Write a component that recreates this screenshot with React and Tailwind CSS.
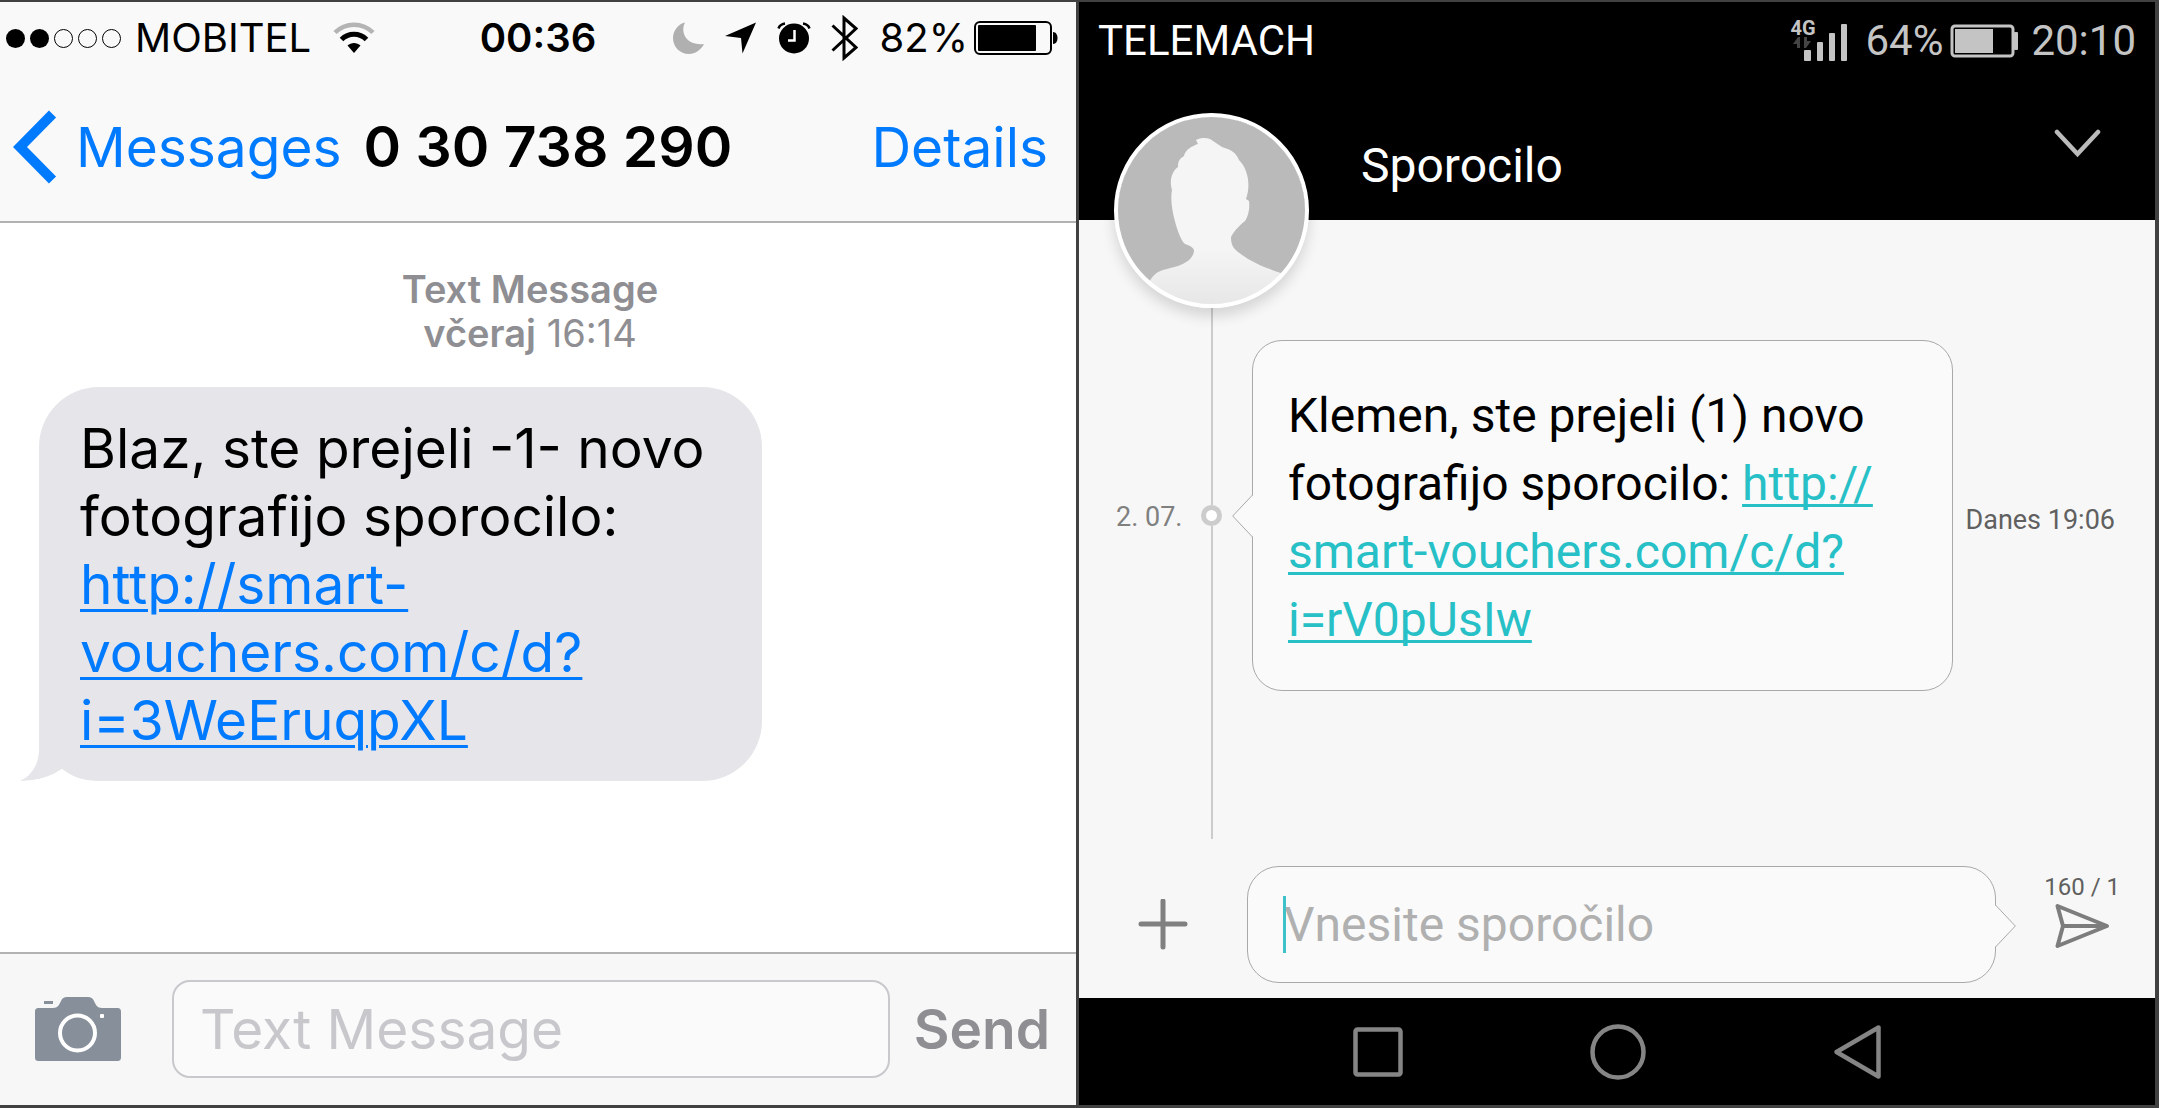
import React, { useState } from 'react';

const SIGNAL_DOTS = [true, true, false, false, false];

function WifiIcon() {
  return (
    <svg width="42" height="32" viewBox="0 0 42 32" fill="none" aria-hidden="true">
      <path d="M2 10.5C12.500 0 29.500 0 40 10.500" stroke="#b4b4b4" strokeWidth="4.500" />
      <path d="M8.500 17.500C15.500 10.500 26.500 10.500 33.500 17.500" stroke="#000" strokeWidth="5" />
      <path d="M14.500 23.500C18 20 24 20 27.500 23.500L21 31Z" fill="#000" />
    </svg>
  );
}

function AlarmIcon() {
  return (
    <svg width="34" height="32" viewBox="0 0 34 32" fill="none" aria-hidden="true">
      <circle cx="17" cy="16.500" r="15" fill="#000" />
      <path d="M17.500 8V18.500H11" stroke="#fff" strokeWidth="2.500" />
      <path d="M1.500 6.500C2.500 3.500 4.500 2 8 1.500M32.500 6.500C31.500 3.500 29.500 2 26 1.500" stroke="#000" strokeWidth="2.500" />
    </svg>
  );
}

function IosBattery() {
  return (
    <svg width="85" height="34" viewBox="0 0 85 34" fill="none" aria-hidden="true">
      <rect x="1" y="1" width="76" height="32" rx="5" stroke="#000" strokeWidth="2" />
      <rect x="4" y="4" width="58" height="26" rx="1" fill="#000" />
      <path d="M79 11C85 11 85 23 79 23Z" fill="#000" />
    </svg>
  );
}

function CameraIcon() {
  return (
    <svg width="86" height="64" viewBox="0 0 86 64" aria-hidden="true">
      <path
        d="M4 11H18C23 11 24 8 26 4C27.500 1 29 0 32 0H53C56 0 57.500 1 59 4C61 8 62 11 67 11H82C85 11 86 12 86 15V60C86 63 85 64 82 64H4C1 64 0 63 0 60V15C0 12 1 11 4 11Z"
        fill="#868f9a"
      />
      <rect x="9" y="4" width="9" height="3" fill="#868f9a" />
      <circle cx="42.500" cy="36" r="17.500" fill="none" stroke="#fff" strokeWidth="4" />
      <rect x="65" y="17" width="4" height="4" rx="1" fill="#fff" />
    </svg>
  );
}

function IosStatusBar() {
  return (
    <div className="grid h-[72px] grid-cols-[1fr_auto_1fr] items-center px-[6px] text-[40px] leading-[48px] text-black">
      <div className="flex items-center">
        <div className="flex gap-[5px]">
          {SIGNAL_DOTS.map((on, i) => (
            <span key={i} className={on ? 'size-[19px] rounded-full bg-black' : 'size-[19px] rounded-full border border-black'} />
          ))}
        </div>
        <span className="mr-[22px] ml-[14px]">MOBITEL</span>
        <WifiIcon />
      </div>
      <span className="font-semibold">00:36</span>
      <div className="flex items-center justify-end pr-[11px]">
        <svg width="32" height="32" viewBox="0 0 32 32" aria-hidden="true">
          <path d="M12 0.500C7 10 13 24 31 22C28 28 22 32 16 32C7 32 0 25 0 16C0 9 5 2 12 0.500Z" fill="#b0b0b0" />
        </svg>
        <svg className="ml-[20px]" width="32" height="32" viewBox="0 0 32 32" aria-hidden="true">
          <path d="M31 0.500L17.500 31.500L16 16L0 14Z" fill="#000" />
        </svg>
        <span className="ml-[20px]"><AlarmIcon /></span>
        <svg className="ml-[20px]" width="27" height="46" viewBox="0 0 27 46" fill="none" aria-hidden="true">
          <path d="M1.500 10.500L25 32.500L13 43V3L25 13.500L1.500 35.500" stroke="#000" strokeWidth="3" />
        </svg>
        <span className="mr-[6px] ml-[22px]">82%</span>
        <IosBattery />
      </div>
    </div>
  );
}

function IosPhone() {
  const [text, setText] = useState('');

  return (
    <section className="flex flex-col bg-white font-['Inter',sans-serif]">
      <header className="border-b-2 border-[#b2b2b2] bg-[#f9f9f9]">
        <IosStatusBar />
        <div className="flex h-[147px] items-center pr-[28px] pb-[2px] pl-[13px] text-[55px] leading-[68px]">
          <button type="button" className="flex items-center gap-[19px] text-[#007aff]">
            <svg width="44" height="74" viewBox="0 0 44 74" fill="none" aria-hidden="true">
              <path d="M39.500 4L7 37L39.500 70" stroke="currentColor" strokeWidth="10" />
            </svg>
            Messages
          </button>
          <h1 className="ml-[22px] text-[57px] font-semibold whitespace-nowrap text-black">0 30 738 290</h1>
          <button type="button" className="ml-auto text-[#007aff]">Details</button>
        </div>
      </header>

      <div className="flex-1 pt-[44px]">
        <p className="pr-[16px] text-center text-[38px] leading-[44px] text-[#8e8e93]">
          <span className="font-semibold">Text Message</span>
          <br />
          <span className="font-semibold">včeraj</span> 16:14
        </p>
        <div className="relative mt-[32px] ml-[39px] w-fit rounded-[60px] bg-[#e5e5ea] py-[27px] pr-[57px] pl-[41px] text-[55px] leading-[68px] text-black">
          <svg className="absolute bottom-0 -left-[19px]" width="80" height="60" viewBox="0 0 80 60" aria-hidden="true">
            <path d="M19 0V28C19 42 13 54 0 60C16 60 31 56 42 48C52 56 62 60 80 60V0Z" fill="#e5e5ea" />
            <path d="M0 60C16 60 31 56 42 48C52 56 62 60 80 60Z" fill="#fff" />
          </svg>
          <p className="relative">
            Blaz, ste prejeli -1- novo
            <br />
            fotografijo sporocilo:
            <br />
            <a href="#" className="text-[#007aff] underline decoration-[3px] underline-offset-[5px]">
              http://smart-
              <br />
              vouchers.com/c/d?
              <br />
              i=3WeEruqpXL
            </a>
          </p>
        </div>
      </div>

      <footer className="flex items-center border-t-2 border-[#b2b2b2] bg-[#f7f7f7] pt-[26px] pr-[26px] pb-[27px] pl-[35px] text-[55px]">
        <button type="button" aria-label="Camera"><CameraIcon /></button>
        <input
          type="text"
          aria-label="Text Message"
          placeholder="Text Message"
          value={text}
          onChange={(e) => setText(e.target.value)}
          className="ml-[51px] h-[98px] min-w-0 flex-1 rounded-[18px] border-2 border-[#c8c8cd] bg-[#fafafa] px-[26px] placeholder:text-[#c7c7cc] placeholder:opacity-100"
        />
        <button type="button" className="ml-[24px] font-semibold text-[#8e8e93]">Send</button>
      </footer>
    </section>
  );
}

function MobileSignal() {
  return (
    <span className="flex items-start">
      <span className="flex w-[26px] flex-col items-start text-[20px] leading-[18px] font-bold">
        4G
        <svg className="ml-[3px]" width="18" height="12" viewBox="0 0 18 12" fill="#444" aria-hidden="true">
          <path d="M7 0V11H4V7H0L5 0ZM11 0H14V4H18L13 11H11Z" />
        </svg>
      </span>
      <svg className="-ml-[12px]" width="45" height="44" viewBox="0 0 45 44" fill="currentColor" aria-hidden="true">
        <rect x="0" y="31" width="7" height="11" rx="1" />
        <rect x="13" y="23" width="6" height="19" rx="1" />
        <rect x="25" y="14" width="6" height="28" rx="1" />
        <rect x="37" y="5" width="6" height="37" rx="1" />
      </svg>
    </span>
  );
}

function Avatar() {
  return (
    <svg className="size-full" viewBox="0 0 195 195" aria-hidden="true">
      <defs>
        <clipPath id="avatar-clip"><circle cx="97.500" cy="97.500" r="94" /></clipPath>
        <linearGradient id="avatar-body" x1="0" y1="0" x2="0" y2="1">
          <stop offset="0.650" stopColor="#f5f5f5" />
          <stop offset="1" stopColor="#e6e6e6" />
        </linearGradient>
      </defs>
      <circle cx="97.500" cy="97.500" r="94" fill="#bababa" />
      <path
        clipPath="url(#avatar-clip)"
        fill="url(#avatar-body)"
        d="M34 172C37 164 42 159 49 157L64 153C74 149 79 145 80 138C80 135 77 133 71 131C66 127 61 110 59 100C57 90 57 82 58 77C55 68 58 58 64 54C64 49 65 46 70 43C71 37 78 33 84 31L82 27C88 24 92 25 96 26L108 34C118 37 122 40 125 47C134 56 137 72 132 86L135 88C136 96 134 104 131 108C126 112 120 118 117 124C117 130 118 134 124 139C138 150 152 155 170 161V195H34Z"
      />
      <circle cx="97.500" cy="97.500" r="95.500" fill="none" stroke="#fff" strokeWidth="4" />
    </svg>
  );
}

function AndroidHeader() {
  return (
    <header className="relative bg-black text-white">
      <div className="flex h-[78px] items-center pr-[19px] pl-[19px] text-[42px] leading-[48px]">
        <span>TELEMACH</span>
        <div className="ml-auto flex items-center text-[#c4c4c4]">
          <MobileSignal />
          <span className="ml-[16px]">64%</span>
          <svg className="ml-[7px]" width="68" height="34" viewBox="0 0 68 34" fill="none" aria-hidden="true">
            <rect x="2" y="2" width="61" height="30" rx="3" stroke="currentColor" strokeWidth="3" />
            <rect x="5" y="5" width="38" height="24" fill="currentColor" />
            <rect x="64" y="8" width="4" height="18" rx="1" fill="currentColor" />
          </svg>
          <span className="ml-[13px]">20:10</span>
        </div>
      </div>
      <div className="flex items-start pt-[48px] pr-[54px] pb-[26px] pl-[282px]">
        <h1 className="mt-[10px] text-[48px] leading-[56px]">Sporocilo</h1>
        <button type="button" aria-label="Expand" className="ml-auto">
          <svg width="47" height="30" viewBox="0 0 47 30" fill="none" aria-hidden="true">
            <path d="M3 4L23.500 26L44 4" stroke="#bbb" strokeWidth="4.500" strokeLinecap="round" />
          </svg>
        </button>
      </div>
      <div className="absolute -bottom-[88px] left-[35px] size-[195px] rounded-full shadow-[0_8px_14px_rgba(0,0,0,0.14)]">
        <Avatar />
      </div>
    </header>
  );
}

function AndroidPhone() {
  const [text, setText] = useState('');

  return (
    <section className="flex flex-col bg-[#f7f7f7] font-['Roboto',sans-serif]">
      <AndroidHeader />

      <div className="flex flex-1 items-start pr-[40px] pl-[37px] text-[27px] leading-[32px]">
        <time className="mt-[281px] w-[85px] shrink-0 text-[#808080]">2. 07.</time>
        <div className="flex shrink-0 flex-col items-center self-stretch">
          <span className="h-[285px] w-[2px] bg-[#ccc]" />
          <span className="size-[21px] rounded-full border-[5px] border-[#ccc] bg-white" />
          <span className="w-[2px] flex-1 bg-[#ccc]" />
        </div>
        <div className="relative mt-[120px] mr-[12px] ml-[30px] flex-1 rounded-[30px] border border-[#a9a9a9] bg-[#fafafa] pt-[41px] pb-[36px] pl-[35px] text-[48px] leading-[68px] text-black">
          <p>
            Klemen, ste prejeli (1) novo
            <br />
            fotografijo sporocilo:{' '}
            <a href="#" className="text-[#27c0c7] underline decoration-[3px] underline-offset-[4px] [text-decoration-skip-ink:none]">
              http://
              <br />
              smart-vouchers.com/c/d?
              <br />
              i=rV0pUsIw
            </a>
          </p>
          <svg className="absolute top-[154px] -left-[21px]" width="22" height="42" viewBox="0 0 22 42" aria-hidden="true">
            <path d="M22 0H20.500V0.500L0.500 21L20.500 41.500V42H22Z" fill="#fafafa" />
            <path d="M20.500 0L0.700 21L20.500 42" fill="none" stroke="#a9a9a9" />
          </svg>
        </div>
        <time className="mt-[284px] shrink-0 text-[#606060]">Danes 19:06</time>
      </div>

      <div className="flex items-center pt-[27px] pr-[35px] pb-[15px] pl-[59px]">
        <button type="button" aria-label="Add attachment">
          <svg width="50" height="52" viewBox="0 0 50 52" fill="none" aria-hidden="true">
            <path d="M25 2V48M3 25H47" stroke="#808080" strokeWidth="5" strokeLinecap="round" />
          </svg>
        </button>
        <div className="relative ml-[59px] flex-1">
          <input
            type="text"
            aria-label="Vnesite sporočilo"
            placeholder="Vnesite sporočilo"
            value={text}
            onChange={(e) => setText(e.target.value)}
            className="block h-[117px] w-full rounded-[32px] border border-[#a9a9a9] bg-[#fafafa] px-[36px] text-[48px] caret-[#27c0c7] placeholder:text-[#b0b0b0] placeholder:opacity-100"
          />
          <span className="absolute top-[30px] left-[36px] h-[57px] w-[3px] bg-[#3fc1c9]" />
          <svg className="absolute top-[39px] -right-[20px]" width="22" height="42" viewBox="0 0 22 42" aria-hidden="true">
            <path d="M0 0H1.500V0.500L21.500 21L1.500 41.500V42H0Z" fill="#fafafa" />
            <path d="M1.500 0L21.300 21L1.500 42" fill="none" stroke="#a9a9a9" />
          </svg>
        </div>
        <div className="ml-[48px] flex flex-col items-center gap-[2px] self-start pt-[7px]">
          <span className="text-[24px] leading-[28px] text-[#606060]">160 / 1</span>
          <button type="button" aria-label="Send">
            <svg width="55" height="46" viewBox="0 0 55 46" fill="none" aria-hidden="true">
              <path d="M2.500 3L52 23L2.500 43L8 23Z M8 23H52" stroke="#7d7d7d" strokeWidth="4" strokeLinejoin="round" />
            </svg>
          </button>
        </div>
      </div>

      <nav className="flex h-[107px] items-center justify-center gap-[187px] bg-black pl-[2px] text-[#858585]">
        <button type="button" aria-label="Recent apps">
          <svg width="50" height="50" viewBox="0 0 50 50" fill="none" aria-hidden="true">
            <rect x="2.500" y="2.500" width="45" height="45" rx="2" stroke="currentColor" strokeWidth="4.500" />
          </svg>
        </button>
        <button type="button" aria-label="Home">
          <svg width="56" height="56" viewBox="0 0 56 56" fill="none" aria-hidden="true">
            <circle cx="28" cy="28" r="25.500" stroke="currentColor" strokeWidth="4.500" />
          </svg>
        </button>
        <button type="button" aria-label="Back">
          <svg width="50" height="56" viewBox="0 0 50 56" fill="none" aria-hidden="true">
            <path d="M45.500 3.500V52.500L3.500 28Z" stroke="currentColor" strokeWidth="4.500" strokeLinejoin="round" />
          </svg>
        </button>
      </nav>
    </section>
  );
}

export default function App() {
  return (
    <main className="grid min-h-screen grid-cols-2 gap-[3px] bg-[#414141] pt-[2px] pr-[4px] pb-[3px]">
      <IosPhone />
      <AndroidPhone />
    </main>
  );
}
